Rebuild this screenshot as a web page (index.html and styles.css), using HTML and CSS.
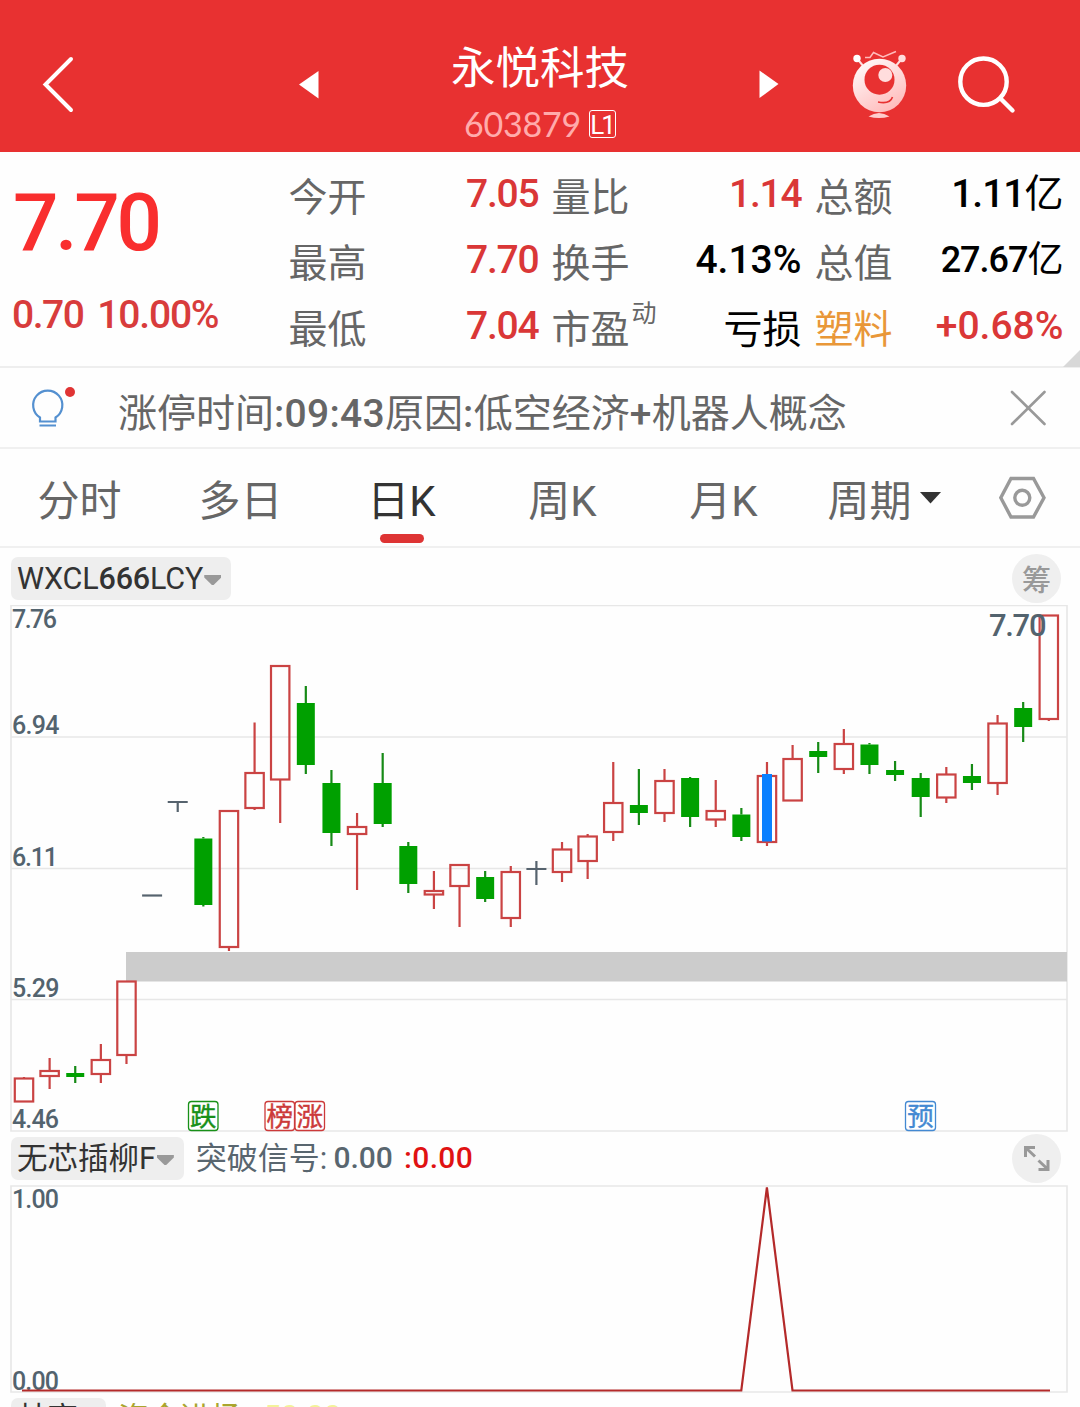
FILE: index.html
```html
<!DOCTYPE html>
<html lang="zh-CN">
<head>
<meta charset="utf-8">
<title>永悦科技 603879</title>
<link rel="stylesheet" href="styles.css">
</head>
<body>
<main class="app">
  <header class="topbar">
    <svg class="back" width="90" height="152" viewBox="0 0 90 152"><path d="M71 59 45.500 84.500 71 110"/></svg>
    <svg class="arrow" width="20" height="152" viewBox="299 0 20 152"><path d="M299 84.500 318.500 71V98.500Z"/></svg>
    <div class="stock">
      <h1 class="name">永悦科技</h1>
      <div class="code"><span>603879</span><span class="level">L1</span></div>
    </div>
    <svg class="arrow next" width="20" height="152" viewBox="759 0 20 152"><path d="M759.500 70.500 778.500 84 759.500 98Z"/></svg>
    <svg class="robot" width="60" height="152" viewBox="850 0 60 152">
      <defs><linearGradient id="body" x1="0" y1="0" x2="0.600" y2="1"><stop offset="0" stop-color="#fff"/><stop offset="1" stop-color="#ffbebe"/></linearGradient></defs>
      <path d="M865 57.500H870L873.500 52.500 883 57 896 51.500" fill="none" stroke="#fbb" stroke-width="1.500"/>
      <path d="M857 58.500 864 67M902 58.500 895 67" stroke="#fdd" stroke-width="2"/>
      <circle cx="857" cy="58.500" r="3.700" fill="#fff"/><circle cx="902" cy="58.500" r="3.700" fill="#fdd"/>
      <circle cx="879.500" cy="85.500" r="26.700" fill="url(#body)"/>
      <circle cx="879.500" cy="79.700" r="15" fill="#e83131"/>
      <circle cx="885.300" cy="75" r="7" fill="#fdd"/>
      <path d="M878 102Q890 104.500 892.500 97" fill="none" stroke="#e83131" stroke-width="1.600"/>
      <path d="M868.500 116.500Q879 109.500 889.500 116.500 879 119.500 868.500 116.500Z" fill="#fcc"/>
    </svg>
    <svg class="search" width="62" height="152" viewBox="956 0 62 152"><circle cx="983.500" cy="81.700" r="23.200"/><path d="M1000.500 98.500 1012.500 110.500"/></svg>
  </header>

  <section class="quote">
    <div class="price">
      <div class="last">7.70</div>
      <div class="change"><span>0.70</span><span class="percent">10.00%</span></div>
    </div>
    <dl class="stats">
      <div><dt>今开</dt><dd class="up">7.05</dd></div>
      <div><dt>量比</dt><dd class="up">1.14</dd></div>
      <div><dt>总额</dt><dd>1.11<span class="unit">亿</span></dd></div>
      <div><dt>最高</dt><dd class="up">7.70</dd></div>
      <div><dt>换手</dt><dd class="percent">4.13%</dd></div>
      <div><dt>总值</dt><dd class="small">27.67<span class="unit">亿</span></dd></div>
      <div><dt>最低</dt><dd class="up">7.04</dd></div>
      <div><dt>市盈<sup>动</sup></dt><dd class="word">亏损</dd></div>
      <div><dt class="sector">塑料</dt><dd class="up percent">+0.68%</dd></div>
    </dl>
    <i class="corner"></i>
  </section>

  <section class="notice">
    <svg width="50" height="79" viewBox="30 368 50 79">
      <g fill="none" stroke="#5490d0" stroke-width="2.200"><path d="M40 421.500V417.500A14.600 14.600 0 1 1 55.500 417.500V421.500ZM39.500 425.500H56"/></g>
      <circle cx="70" cy="392" r="5" fill="#e03434"/>
    </svg>
    <p>涨停时间<b>:09:43</b>原因<b>:</b>低空经济<b>+</b>机器人概念</p>
    <svg class="close" width="38" height="79" viewBox="1009 368 38 79"><path d="M1012 392 1044.500 424M1044.500 392 1012 424"/></svg>
  </section>

  <nav class="tabs">
    <span>分时</span><span>多日</span><span class="active">日K</span><span>周K</span><span>月K</span>
    <span>周期<i class="caret"></i></span>
    <svg width="50" height="98" viewBox="997 449 50 98"><path d="M1011 478.500H1033.500L1044 497.800 1033.500 517H1011L1000.800 497.800Z"/><circle cx="1022.300" cy="497.800" r="7.500"/></svg>
  </nav>

  <div class="toolbar first">
    <span class="pill latin">WXCL<b>666</b>LCY<i class="caret"></i></span>
    <span class="round">筹</span>
  </div>
  <svg class="chart" id="kline" width="1080" height="527" viewBox="0 605 1080 527">
    <g class="grid"><path d="M11 605.500H1067V1131H11ZM11 737H1067M11 868.500H1067M11 999.500H1067"/></g>
    <rect x="126" y="952" width="941" height="29.500" fill="#ccc"/>
    <g id="candles"></g>
    <rect x="762" y="774" width="10" height="67.500" fill="#0a80ff"/>
    <g class="axis">
      <text x="12" y="628" textLength="45">7.76</text>
      <text x="12" y="734" textLength="47.500">6.94</text>
      <text x="12" y="866" textLength="46">6.11</text>
      <text x="12" y="997" textLength="47.500">5.29</text>
      <text x="12" y="1128" textLength="47">4.46</text>
      <text class="peak" x="989" y="636" textLength="57.500">7.70</text>
    </g>
    <g class="tag" fill="#189018" stroke="#189018"><rect x="188.500" y="1101.500" width="29.500" height="29" rx="3"/><text x="203.300" y="1125.500">跌</text></g>
    <g class="tag" fill="#cc3a3a" stroke="#cc3a3a"><rect x="265" y="1101.500" width="29.500" height="29" rx="3"/><text x="279.800" y="1125.500">榜</text><rect x="295" y="1101.500" width="29.500" height="29" rx="3"/><text x="309.800" y="1125.500">涨</text></g>
    <g class="tag" fill="#4389d2" stroke="#4389d2"><rect x="905.500" y="1101.500" width="30" height="29" rx="3"/><text x="920.500" y="1125.500">预</text></g>
  </svg>

  <div class="toolbar second">
    <span class="pill">无芯插柳F<i class="caret"></i></span>
    <span class="signal"><span>突破信号:</span><b>0.00</b><b class="hot">:0.00</b></span>
    <span class="round"><svg width="49" height="49" viewBox="1012 1134 49 49"><path d="M1025.500 1157V1147.500H1035M1026 1148 1035 1156.500M1038.500 1169.500H1048V1160M1047.500 1169 1038.500 1160.500"/></svg></span>
  </div>
  <svg class="chart" width="1080" height="208" viewBox="0 1185 1080 208">
    <g class="grid"><path d="M11 1186H1067V1392H11Z"/></g>
    <g class="axis"><text x="12" y="1208" textLength="47">1.00</text><text x="12" y="1390" textLength="47">0.00</text></g>
    <path d="M22 1390.500H741.300L766.900 1187.500 792.500 1390.500H1050" fill="none" stroke="#b42a2a" stroke-width="2.200"/>
  </svg>

  <div class="toolbar third">
    <span class="pill">林高<i class="caret"></i></span>
    <span class="inflow">资金进场:</span><span class="inflow bright">50.00</span>
  </div>
</main>
<script src="chart.js"></script>
</body>
</html>
```
FILE: styles.css
```css
* { box-sizing: border-box; }
body { margin: 0; background: #fefefe; }
.app {
  width: 1080px; height: 1407px; overflow: hidden;
  font-family: Roboto, "Noto Sans CJK SC", sans-serif; color: #666;
}
svg { display: block; flex: none; }
h1, p, dl, dt, dd { margin: 0; font-weight: 400; }

.topbar {
  height: 152px; background: #e83131; color: #fff;
  display: grid; grid-template-columns: 299px 151px 180px 129px 91px 106px 1fr;
}
.topbar .arrow path { fill: #fff; }
.topbar .next { grid-column: 5; }
.stock { padding-top: 39px; display: flex; flex-direction: column; align-items: center; }
.back path { fill: none; stroke: #fff; stroke-width: 4; stroke-linecap: round; }
.search circle, .search path { fill: none; stroke: #fff; stroke-width: 4.400; stroke-linecap: round; }
.name { font: 400 44.500px/52px "Noto Sans CJK SC", sans-serif; white-space: nowrap; }
.code { margin-top: 15px; display: flex; align-items: center; gap: 8px; font: 400 34px/36px Lato, sans-serif; color: #ffabab; letter-spacing: -0.200px; }
.level { width: 27px; height: 28px; border: 1px solid #fff; border-radius: 3px; color: #fff; font: 400 26px/28px Roboto, sans-serif; letter-spacing: -3px; text-indent: -2px; text-align: center; }

.quote { position: relative; height: 216px; display: flex; border-bottom: 2px solid #eee; }
.price { width: 288.500px; padding-left: 12px; }
.last { margin: 24px 0 0 1px; height: 94px; font-size: 80px; line-height: 94px; font-weight: 500; color: #f92e2e; letter-spacing: -3.200px; }
.change { margin-top: 22px; display: flex; gap: 14px; font-size: 39px; line-height: 46px; font-weight: 500; color: #d83c3c; letter-spacing: -1.500px; }
.change .percent { letter-spacing: -1.200px; }
.stats { width: 775px; padding-top: 9px; display: grid; grid-template-columns: 250px 250px 249px; column-gap: 13px; grid-auto-rows: 66px; font-size: 39px; line-height: 66px; }
.stats div { display: flex; justify-content: space-between; white-space: nowrap; }
.stats dt, .stats .word { font-family: "Noto Sans CJK SC", sans-serif; }
.stats dd { font-weight: 500; color: #000; letter-spacing: -1px; }
.stats dd.up { color: #da3737; letter-spacing: -1.200px; }
.stats dd.percent { letter-spacing: 0; }
.stats .unit, .stats dd.word { font-weight: 400; letter-spacing: 0; }
.stats dd.small { font-size: 36px; }
.stats .sector { color: #e99738; }
.stats sup { font-size: 25px; line-height: 1; position: relative; top: -7px; vertical-align: 14px; margin-left: 2px; }
.corner { position: absolute; right: 0; bottom: -1px; width: 17px; height: 17px; background: #d8d8d8; clip-path: polygon(100% 0, 100% 100%, 0 100%); }

.notice { height: 81px; padding: 0 33px 0 30px; border-bottom: 2px solid #f0f0f0; display: flex; }
.notice p { flex: 1; margin-left: 38px; padding-top: 1px; font-family: "Noto Sans CJK SC", sans-serif; font-size: 39px; line-height: 82px; white-space: nowrap; }
.notice b { font-family: Roboto, sans-serif; font-weight: 500; letter-spacing: 0.300px; }
.close path { stroke: #999; stroke-width: 2.600; stroke-linecap: round; }

.tabs { height: 99px; padding-right: 33px; border-bottom: 2px solid #f0f0f0; display: flex; }
.tabs span { position: relative; width: 161px; padding: 8px 2px 0 0; display: flex; justify-content: center; align-items: center; font-size: 42px; line-height: 89px; }
.tabs .active { color: #333; }
.tabs .active::after { content: ""; position: absolute; left: 58px; top: 85px; width: 44px; height: 9px; border-radius: 5px; background: #de3434; }
.tabs svg { margin-left: auto; fill: none; stroke: #999; stroke-width: 3.400; }
.caret { display: inline-block; width: 17px; height: 10px; background: #999; clip-path: polygon(0 0, 100% 0, 100% 25%, 55% 100%, 45% 100%, 0 25%); }
.tabs .caret { width: 22px; height: 12px; margin: 0 0 8px 8px; background: #333; clip-path: polygon(0 0, 100% 0, 50% 100%); }

.toolbar { display: flex; align-items: flex-start; padding: 0 19px 0 11px; }
.first { height: 57px; padding-top: 6px; }
.second { height: 53px; padding-top: 2px; }
.third { height: 14px; padding-top: 5px; }
.pill { height: 43px; margin-top: 3px; padding: 0 10px 0 6px; border-radius: 7px; background: #eee; color: #333; display: flex; align-items: center; font-size: 30.500px; line-height: 43px; white-space: nowrap; }
.pill b { font-weight: 500; }
.third .pill { margin-top: 0; line-height: 41px; align-items: flex-start; }
.pill .caret { margin: 3px 0 0 1px; }
.third .caret { margin-top: 20px; }
.latin { letter-spacing: -0.150px; }
.round { width: 49px; height: 49px; margin-left: auto; border-radius: 50%; background: #efefef; color: #999; text-align: center; font: 500 29px/48px "Noto Sans CJK SC", sans-serif; }
.round path { fill: none; stroke: #999; stroke-width: 3; }
.signal { margin: 2px 0 0 12px; display: flex; font-size: 31px; line-height: 45px; color: #59666f; }
.signal b { font-weight: 500; margin-left: 6px; font-size: 30px; line-height: 44px; }
.signal .hot { margin-left: 11px; color: #e01212; letter-spacing: 0.400px; }
.inflow { margin-left: 12px; font-size: 31px; line-height: 41px; color: #aaa52d; white-space: nowrap; }
.bright { margin-left: 14px; line-height: 37px; color: #f3f29a; }

.grid path { fill: none; stroke: #e7e7e7; stroke-width: 1.600; }
.axis text { font: 500 25px Roboto, sans-serif; fill: #53636e; }
.axis .peak { font-size: 31px; }
.tag rect { fill: #fff; stroke-width: 1.300; }
.tag text { font: 400 26.500px "Noto Sans CJK SC", sans-serif; text-anchor: middle; stroke-width: 0.400; }
.rise path, .rise rect { fill: none; stroke: #ca4343; stroke-width: 2.200; }
.fall path { stroke: #168a16; stroke-width: 2.200; }
.fall rect { fill: #00a000; }
.flat path { stroke: #56636e; stroke-width: 2.200; fill: none; }
```
FILE: chart.js
```js
// Each candle: direction, high, body top, body bottom, low (vertical chart units).
const candles = [
  ["rise",1077,1078.5,1101.5,1101.5],["rise",1058,1071,1076,1089],["fall",1066,1073,1077,1083],
  ["rise",1044,1060,1074,1083],["rise",981.5,981.5,1055,1064],["flat",895.5,895.5,895.5,895.5],
  ["flat",801,802,802,812],["fall",837,838.5,905,906.5],["rise",811,811,947,951],
  ["rise",722.5,773,808,810],["rise",666,666,779.5,823],["fall",686,703,765,774],
  ["fall",770,783,833,846],["rise",813,827,834,890],["fall",753,783,824,827],
  ["fall",842,846,884,893],["rise",871,891,894.5,909],["rise",865,865,886,927],
  ["fall",871,877,899,902],["rise",866,872,918,927],["flat",861,869,869,885],
  ["rise",842,849.5,872,882],["rise",834,836.5,861,879],["rise",762,803,832,841],
  ["fall",769,805,813,825],["rise",769,781,813,822],["fall",777,778,817,827],
  ["rise",780,811,819.5,827],["fall",808,814.5,837,841],["rise",762,776,842,846],
  ["rise",745,759,800.5,800.5],["fall",742,751,757,773],["rise",729,744,769,774],
  ["fall",743,744.5,765,774],["fall",761,770,775,781],["fall",773,778,797,817],
  ["rise",767,774.5,797.5,803],["fall",764,776,783,790],["rise",715,723.5,783,795],
  ["fall",702,708,727,742],["rise",615.5,615.5,719,721]
];
document.getElementById("candles").innerHTML = candles.map(([kind, high, top, bottom, low], i) => {
  const x = 24 + i * 25.62;
  if (kind === "flat") {
    return `<g class="flat"><path d="M${x - 10} ${top}H${x + 10}M${x} ${high}V${low}"/></g>`;
  }
  const half = kind === "rise" ? 9.2 : 9;
  return `<g class="${kind}"><path d="M${x} ${high}V${top}M${x} ${bottom}V${low}"/>` +
    `<rect x="${x - half}" y="${top}" width="${half * 2}" height="${bottom - top}"/></g>`;
}).join("");
```
